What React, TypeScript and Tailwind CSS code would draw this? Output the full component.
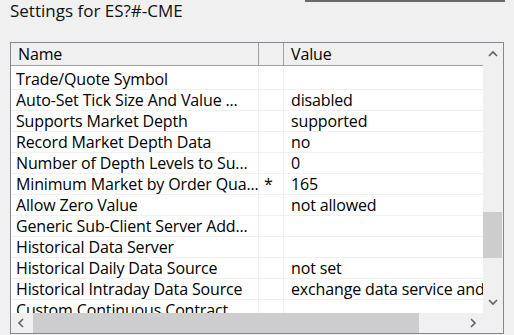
import React from "react";

const rows: [string, string, string][] = [
  ["Trade/Quote Symbol", "", ""],
  ["Auto-Set Tick Size And Value ...", "", "disabled"],
  ["Supports Market Depth", "", "supported"],
  ["Record Market Depth Data", "", "no"],
  ["Number of Depth Levels to Su...", "", "0"],
  ["Minimum Market by Order Qua...", "*", "165"],
  ["Allow Zero Value", "", "not allowed"],
  ["Generic Sub-Client Server Add...", "", ""],
  ["Historical Data Server", "", ""],
  ["Historical Daily Data Source", "", "not set"],
  ["Historical Intraday Data Source", "", "exchange data service and other sources"],
  ["Custom Continuous Contract", "", ""],
];

function Chevron({ dir }: { dir: "up" | "down" | "left" | "right" }) {
  const paths: Record<string, string> = {
    up: "M1 6 L5 2 L9 6",
    down: "M1 2 L5 6 L9 2",
    left: "M6 1 L2 5 L6 9",
    right: "M2 1 L6 5 L2 9",
  };
  const vertical = dir === "up" || dir === "down";
  return (
    <svg
      width={vertical ? 10 : 8}
      height={vertical ? 8 : 10}
      viewBox={vertical ? "0 0 10 8" : "0 0 8 10"}
    >
      <path d={paths[dir]} fill="none" stroke="#606060" strokeWidth="1.6" />
    </svg>
  );
}

export default function App() {
  return (
    <div
      className="w-[514px] h-[335px] bg-[#f0f0f0] overflow-hidden text-black"
      style={{ fontFamily: '"Open Sans", sans-serif' }}
    >
      <div className="ml-[305px] w-[200px] h-[2px] bg-[#6a6a6a]" />
      <div className="pl-[10px] h-[40px] text-[17px] leading-[18px] text-[#111]">
        Settings for ES?#-CME
      </div>
      <div className="ml-[10px] w-[494px] h-[292px] border border-[#828790] bg-white flex flex-col">
        <div className="flex h-[270px]">
          <div className="w-[472px] flex flex-col overflow-hidden text-[16px] tracking-[-0.15px]">
            <div className="flex h-[23px] shrink-0 bg-[#f0f0f0] border-b border-[#a0a0a0] leading-[22px]">
              <div className="w-[248px] border-r border-[#a0a0a0] pl-[7px]">Name</div>
              <div className="w-[25px] border-r border-[#a0a0a0]" />
              <div className="flex-1 pl-[7px]">Value</div>
            </div>
            <div className="flex flex-col">
              {rows.map(([name, flag, value], i) => (
                <div
                  key={name}
                  className={`flex shrink-0 border-b border-[#f0f0f0] leading-[20px] ${
                    i === 0 ? "h-[24px] pt-[3px]" : "h-[21px]"
                  }`}
                >
                  <div className="w-[248px] shrink-0 border-r border-[#f0f0f0] pl-[5px] whitespace-nowrap overflow-hidden">
                    {name}
                  </div>
                  <div className="w-[25px] shrink-0 border-r border-[#f0f0f0] pl-[5px]">{flag}</div>
                  <div className="flex-1 pl-[7px] whitespace-nowrap overflow-hidden">{value}</div>
                </div>
              ))}
            </div>
          </div>
          <div className="w-[20px] bg-[#f0f0f0] flex flex-col">
            <div className="h-[20px] flex items-center justify-center pt-[2px]">
              <Chevron dir="up" />
            </div>
            <div className="flex-1 flex flex-col pt-[149px]">
              <div className="h-[46px] w-[19px] bg-[#cdcdcd]" />
            </div>
            <div className="h-[20px] flex items-center justify-center pb-[3px]">
              <Chevron dir="down" />
            </div>
          </div>
        </div>
        <div className="flex h-[20px] bg-[#f0f0f0]">
          <div className="w-[20px] flex items-center justify-center">
            <Chevron dir="left" />
          </div>
          <div className="w-[432px] flex items-stretch pl-[2px]">
            <div className="w-[386px] bg-[#cdcdcd]" />
          </div>
          <div className="w-[20px] flex items-center justify-center">
            <Chevron dir="right" />
          </div>
          <div className="w-[20px]" />
        </div>
      </div>
    </div>
  );
}
